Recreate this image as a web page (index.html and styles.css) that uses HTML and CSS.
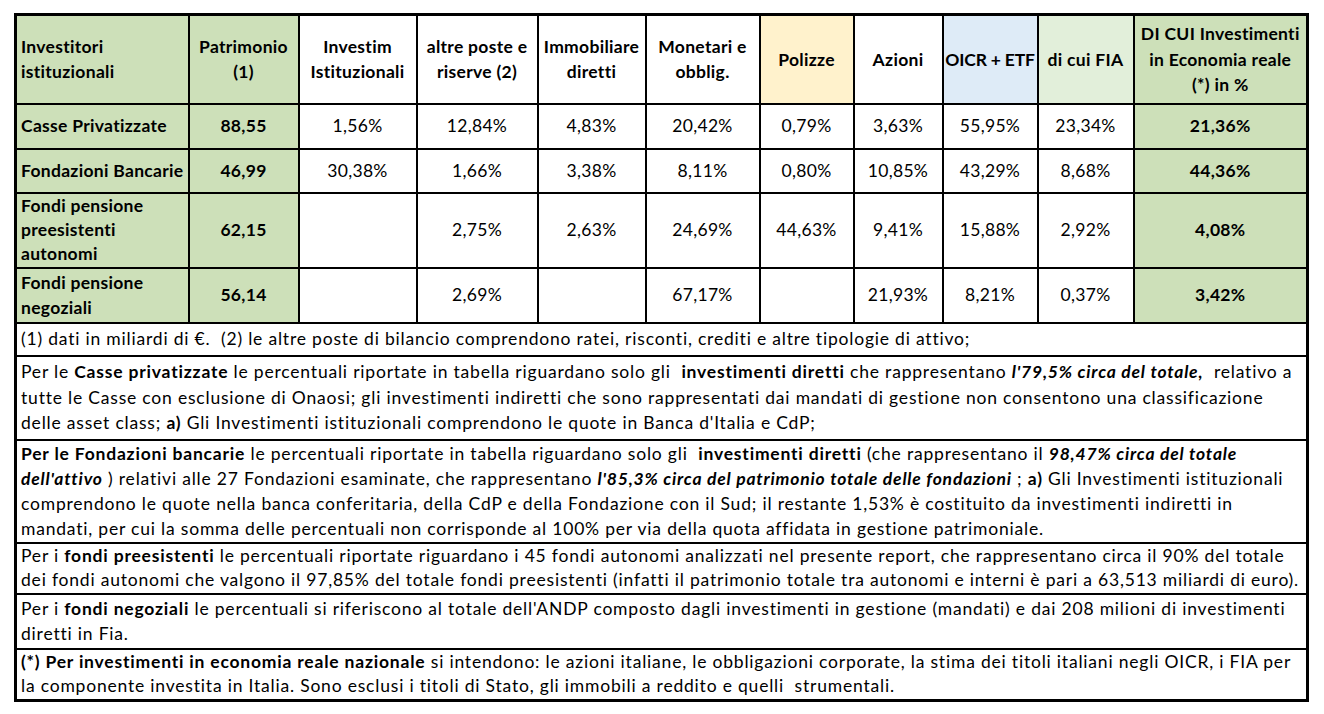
FILE: index.html
```html
<!DOCTYPE html>
<html lang="it">
<head>
<meta charset="utf-8">
<title>Investitori istituzionali</title>
<link rel="stylesheet" href="styles.css">
</head>
<body>
<table class="grid">
  <colgroup>
    <col class="c1"><col class="c2"><col class="c3"><col class="c4"><col class="c5"><col class="c6">
    <col class="c7"><col class="c8"><col class="c9"><col class="c10"><col class="c11">
  </colgroup>
  <tr class="head">
    <th class="green left">Investitori<br>istituzionali</th>
    <th class="green">Patrimonio<br>(1)</th>
    <th>Investim<br>Istituzionali</th>
    <th>altre poste e<br>riserve (2)</th>
    <th>Immobiliare<br>diretti</th>
    <th>Monetari e<br>obblig.</th>
    <th class="yellow">Polizze</th>
    <th>Azioni</th>
    <th class="blue tight">OICR + ETF</th>
    <th class="lgreen">di cui FIA</th>
    <th class="green">DI CUI Investimenti<br>in Economia reale<br>(*) in %</th>
  </tr>
  <tr class="r1">
    <td class="green left b">Casse Privatizzate</td>
    <td class="green b">88,55</td>
    <td>1,56%</td><td>12,84%</td><td>4,83%</td><td>20,42%</td><td>0,79%</td><td>3,63%</td><td>55,95%</td><td>23,34%</td>
    <td class="green b">21,36%</td>
  </tr>
  <tr class="r2">
    <td class="green left b">Fondazioni Bancarie</td>
    <td class="green b">46,99</td>
    <td>30,38%</td><td>1,66%</td><td>3,38%</td><td>8,11%</td><td>0,80%</td><td>10,85%</td><td>43,29%</td><td>8,68%</td>
    <td class="green b">44,36%</td>
  </tr>
  <tr class="r3">
    <td class="green left b">Fondi pensione<br>preesistenti<br>autonomi</td>
    <td class="green b">62,15</td>
    <td></td><td>2,75%</td><td>2,63%</td><td>24,69%</td><td>44,63%</td><td>9,41%</td><td>15,88%</td><td>2,92%</td>
    <td class="green b">4,08%</td>
  </tr>
  <tr class="r4">
    <td class="green left b">Fondi pensione<br>negoziali</td>
    <td class="green b">56,14</td>
    <td></td><td>2,69%</td><td></td><td>67,17%</td><td></td><td>21,93%</td><td>8,21%</td><td>0,37%</td>
    <td class="green b">3,42%</td>
  </tr>
  <tr class="note n1">
    <td colspan="11">(1) dati in miliardi di €.&nbsp; (2) le altre poste di bilancio comprendono ratei, risconti, crediti e altre tipologie di attivo;</td>
  </tr>
  <tr class="note n2">
    <td colspan="11">Per le <b>Casse privatizzate</b> le percentuali riportate in tabella riguardano solo gli&nbsp; <b>investimenti diretti</b> che rappresentano <b><i>l'79,5% circa del totale,</i></b>&nbsp; relativo a<br>tutte le Casse con esclusione di Onaosi; gli investimenti indiretti che sono rappresentati dai mandati di gestione non consentono una classificazione<br>delle asset class; <b>a)</b> Gli Investimenti istituzionali comprendono le quote in Banca d'Italia e CdP;</td>
  </tr>
  <tr class="note n3">
    <td colspan="11"><b>Per le Fondazioni bancarie</b> le percentuali riportate in tabella riguardano solo gli&nbsp; <b>investimenti diretti</b> (che rappresentano il <b><i>98,47% circa del totale<br>dell'attivo</i></b> ) relativi alle 27 Fondazioni esaminate, che rappresentano <b><i>l'85,3% circa del patrimonio totale delle fondazioni</i></b> ; <b>a)</b> Gli Investimenti istituzionali<br>comprendono le quote nella banca conferitaria, della CdP e della Fondazione con il Sud; il restante 1,53% è costituito da investimenti indiretti in<br>mandati, per cui la somma delle percentuali non corrisponde al 100% per via della quota affidata in gestione patrimoniale.</td>
  </tr>
  <tr class="note n4">
    <td colspan="11">Per i <b>fondi preesistenti</b> le percentuali riportate riguardano i 45 fondi autonomi analizzati nel presente report, che rappresentano circa il 90% del totale<br>dei fondi autonomi che valgono il 97,85% del totale fondi preesistenti (infatti il patrimonio totale tra autonomi e interni è pari a 63,513 miliardi di euro).</td>
  </tr>
  <tr class="note n5">
    <td colspan="11">Per i <b>fondi negoziali</b> le percentuali si riferiscono al totale dell'ANDP composto dagli investimenti in gestione (mandati) e dai 208 milioni di investimenti<br>diretti in Fia.</td>
  </tr>
  <tr class="note n6">
    <td colspan="11"><b>(*) Per investimenti in economia reale nazionale</b> si intendono: le azioni italiane, le obbligazioni corporate, la stima dei titoli italiani negli OICR, i FIA per<br>la componente investita in Italia. Sono esclusi i titoli di Stato, gli immobili a reddito e quelli&nbsp; strumentali.</td>
  </tr>
</table>
</body>
</html>
```

FILE: styles.css
```css
html, body {
  margin: 0;
  padding: 0;
  background: #ffffff;
}
body {
  padding: 13px 0 0 14px;
  font-family: Lato, "Open Sans", sans-serif;
  font-size: 17.5px;
  color: #000;
}
.grid {
  border-collapse: collapse;
  table-layout: fixed;
  width: 1294px;
  border: 3px solid #000;
}
.c1 { width: 173px; }
.c2 { width: 110px; }
.c3 { width: 118px; }
.c4 { width: 121px; }
.c5 { width: 108px; }
.c6 { width: 114px; }
.c7 { width: 94px; }
.c8 { width: 89px; }
.c9 { width: 95px; }
.c10 { width: 96px; }
.c11 { width: 174px; }

.grid th, .grid td {
  border: 2px solid #000;
  padding: 0 3px;
  text-align: center;
  vertical-align: middle;
  line-height: 25.5px;
  letter-spacing: 0.3px;
  white-space: nowrap;
  overflow: hidden;
}
.grid th { font-weight: 700; }
.grid .left { text-align: left; padding-left: 4px; }
.grid .b { font-weight: 700; }
.grid .tight { padding: 0; letter-spacing: -0.2px; }

.green { background: #cde0b9; }
.yellow { background: #fff2cc; }
.blue { background: #deebf7; }
.lgreen { background: #e2efda; }

.head { height: 89px; }
.r1 { height: 45px; }
.r2 { height: 44px; }
.r3 { height: 75px; }
.grid .r3 td { line-height: 24.3px; }
.r4 { height: 55px; }

.grid .note td {
  text-align: left;
  padding: 0 4px;
  line-height: 25.5px;
  letter-spacing: 0.8px;
}
.n1 { height: 33px; }
.n2 { height: 84px; }
.n3 { height: 103px; }
.grid .n3 td { line-height: 25px; }
.n4 { height: 51px; }
.grid .n4 td { line-height: 24.5px; }
.n5 { height: 55px; }
.n6 { height: 51px; }
.grid .n6 td { line-height: 24.5px; }
.grid .n5 td { vertical-align: top; padding-top: 1px; }
```
